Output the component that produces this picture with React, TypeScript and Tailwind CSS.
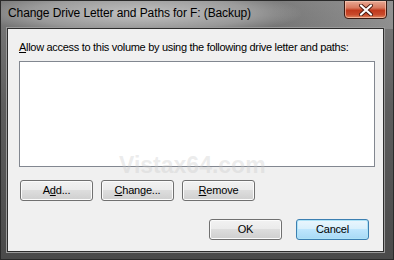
import React from "react";

const font = { fontFamily: '"Segoe UI", "Liberation Sans", Arial, sans-serif' };

function Btn({ children, def = false }: { children: React.ReactNode; def?: boolean }) {
  return (
    <div
      className={
        "w-[73px] h-[21px] rounded-[3px] border flex items-center justify-center text-[11px] tracking-[-0.2px] text-black " +
        (def
          ? "border-[#3c7fb1] bg-[linear-gradient(to_bottom,#eaf6fd_0%,#d9f0fc_45%,#bee6fd_50%,#a7d9f5_100%)] shadow-[inset_0_0_0_1px_#aee3f7]"
          : "border-[#707070] bg-[linear-gradient(to_bottom,#f2f2f2_0%,#ebebeb_45%,#dddddd_50%,#cfcfcf_100%)] shadow-[inset_0_0_0_1px_#fbfbfb]")
      }
    >
      {children}
    </div>
  );
}

export default function App() {
  return (
    <div
      className="w-[394px] h-[260px] relative overflow-hidden flex flex-col bg-[linear-gradient(to_bottom,#7c7c7c_0%,#5e5e5e_40%,#4a4a4a_100%)] border border-[#2a2a2a]"
      style={font}
    >
      {/* glow behind title */}
      <div className="absolute left-[-20px] top-[-10px] w-[320px] h-[45px] rounded-full bg-[radial-gradient(ellipse_at_center,rgba(255,255,255,0.55)_0%,rgba(255,255,255,0.25)_50%,rgba(255,255,255,0)_72%)]" />
      <div className="absolute right-0 top-0 w-[120px] h-[28px] bg-[linear-gradient(to_right,rgba(160,160,160,0),rgba(170,170,170,0.5))]" />
      {/* title bar */}
      <div className="relative h-[27px] flex items-start shrink-0">
        <div className="pl-[7px] pt-[4px] text-[12px] tracking-[-0.1px] text-black leading-[16px] whitespace-nowrap">
          Change Drive Letter and Paths for F: (Backup)
        </div>
        <div className="absolute right-[6px] top-[-1px] w-[43px] h-[19px] rounded-b-[4px] border border-[#3a1a12] bg-[linear-gradient(to_bottom,#e8a995_0%,#d8795f_40%,#c1391c_55%,#c9492b_80%,#e08a62_100%)] shadow-[inset_0_0_0_1px_rgba(255,210,190,0.6)] flex items-center justify-center">
          <svg width="14" height="12" viewBox="0 0 14 12">
            <path d="M2 1.5 L12 10.5 M12 1.5 L2 10.5" stroke="#4a1a10" strokeWidth="4" strokeLinecap="round" />
            <path d="M2 1.5 L12 10.5 M12 1.5 L2 10.5" stroke="#ffffff" strokeWidth="2.2" strokeLinecap="round" />
          </svg>
        </div>
      </div>
      {/* client */}
      <div className="relative ml-[6px] mr-[9px] mb-[7px] flex-1 border border-[#2d2d2d] shadow-[0_0_0_1px_#9a9a9a] bg-[#f0f0f0] flex flex-col px-[11px]">
        <div className="pt-[10px] text-[11px] tracking-[-0.3px] leading-[16px] text-black whitespace-nowrap">
          <span className="underline">A</span>llow access to this volume by using the following drive letter and paths:
        </div>
        <div className="mt-[6px] h-[106px] mr-[-3px] bg-white border border-[#828790]" />
        <div className="flex gap-[8px] mt-[13px] pl-[1px]">
          <Btn>
            A<span className="underline">d</span>d...
          </Btn>
          <Btn>
            <span className="underline">C</span>hange...
          </Btn>
          <Btn>
            <span className="underline">R</span>emove
          </Btn>
        </div>
        <div className="flex justify-end gap-[14px] mt-[18px] mr-[3px]">
          <Btn>OK</Btn>
          <Btn def>Cancel</Btn>
        </div>
        {/* watermark */}
        <div className="absolute left-[111px] top-[119px] text-[23px] font-bold text-[rgba(200,200,200,0.35)]" style={{ fontFamily: '"Liberation Sans", Arial, sans-serif' }}>
          Vistax64.com
        </div>
      </div>
    </div>
  );
}
